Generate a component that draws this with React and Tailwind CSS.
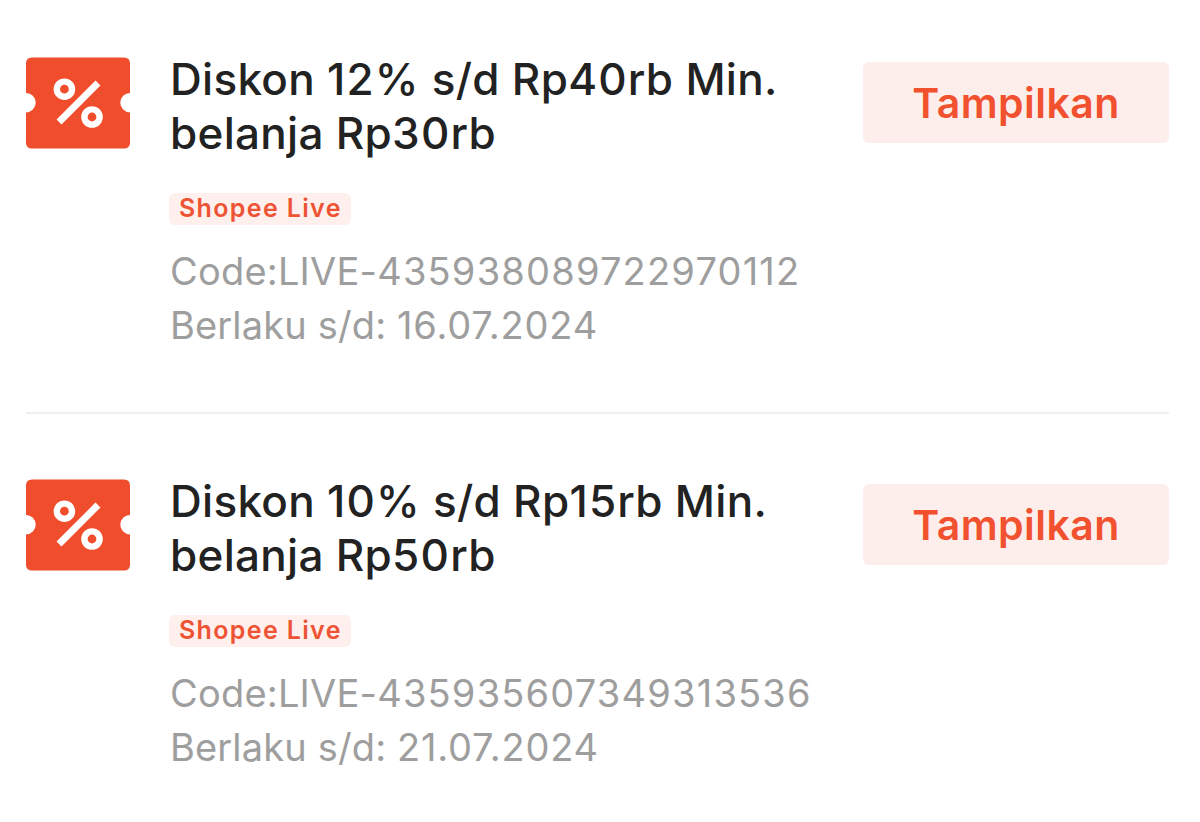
import React from 'react';

const vouchers = [
  {
    id: 1,
    title: ['Diskon 12% s/d Rp40rb Min.', 'belanja Rp30rb'],
    label: 'Shopee Live',
    code: 'LIVE-435938089722970112',
    validUntil: '16.07.2024',
  },
  {
    id: 2,
    title: ['Diskon 10% s/d Rp15rb Min.', 'belanja Rp50rb'],
    label: 'Shopee Live',
    code: 'LIVE-435935607349313536',
    validUntil: '21.07.2024',
  },
];

const VoucherIcon = () => (
  <svg className="mt-[57px] h-[92px] w-[104px] shrink-0" viewBox="0 0 104 92" fill="none">
    {/* Ticket with a notch on both sides */}
    <path
      d="M6 0.5H98Q104 0.5 104 6.5V36A9.7 9.7 0 0 0 104 55.4V85.5Q104 91.5 98 91.5H6Q0 91.5 0 85.5V55.4A9.7 9.7 0 0 0 0 36V6.5Q0 0.5 6 0.5Z"
      fill="#f04d2d"
    />
    <circle cx="38.4" cy="32.2" r="7.6" stroke="white" strokeWidth="6.4" />
    <circle cx="66" cy="60" r="7.6" stroke="white" strokeWidth="6.4" />
    <path d="M35.5 62.5L69.5 28.5" stroke="white" strokeWidth="7" strokeLinecap="square" />
  </svg>
);

// Numbers are set a little wider than the letters around them
const SpacedText = ({ text, spacing }) =>
  text.split(/(\d[\d.%]*)/).map((part, index) =>
    index % 2 === 1 ? (
      <span key={index} className={spacing}>{part}</span>
    ) : (
      part
    )
  );

const Voucher = ({ voucher }) => (
  <div className="flex items-start">
    <VoucherIcon />
    <div className="ml-10 mt-[52px] flex-1 whitespace-nowrap">
      <h2 className="text-[44px] font-medium leading-[54px] tracking-[0.3px] text-[#222222]">
        {voucher.title.map((line) => (
          <span key={line} className="block">
            <SpacedText text={line} spacing="tracking-[1.2px]" />
          </span>
        ))}
      </h2>
      <div className="-ml-px mt-[33px] h-8 w-[182px] rounded-[6px] bg-[#ffefed] pl-[10px] text-[25px] font-semibold leading-[30px] tracking-[1.35px] text-[#ee5434]">
        {voucher.label}
      </div>
      <div className="mt-[19px] text-[38px] leading-[54px] tracking-[0.2px] text-[#9e9e9e]">
        <p><SpacedText text={`Code:${voucher.code}`} spacing="tracking-[1.2px]" /></p>
        <p className="tracking-[0.15px]">
          <SpacedText text={`Berlaku s/d: ${voucher.validUntil}`} spacing="tracking-[0.8px]" />
        </p>
      </div>
    </div>
    <button className="mt-[62px] h-[81px] w-[306px] shrink-0 rounded-[6px] bg-[#fdeeeb] pt-0.5 text-[41px] font-semibold tracking-[0.45px] text-[#f25130]">
      Tampilkan
    </button>
  </div>
);

const App = () => {
  return (
    <div className="h-[822px] overflow-hidden bg-white pl-[26px] pr-[31px] font-['Inter',sans-serif]">
      {vouchers.map((voucher, index) => (
        <div
          key={voucher.id}
          className={index > 0 ? 'h-[410px] border-t-2 border-[#efefef] pt-2' : 'h-[412px]'}
        >
          <Voucher voucher={voucher} />
        </div>
      ))}
    </div>
  );
};

export default App;
